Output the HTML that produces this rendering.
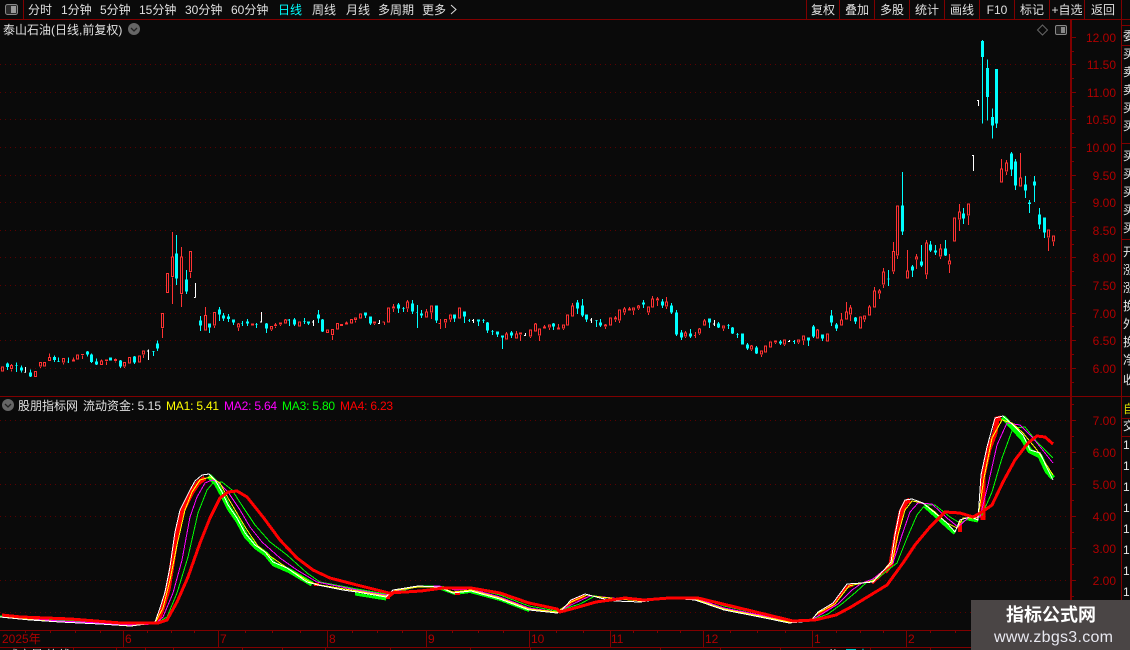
<!DOCTYPE html>
<html><head><meta charset="utf-8"><style>
html,body{margin:0;padding:0;background:#0a0a0a;overflow:hidden}
svg{display:block}
text{font-family:"Liberation Sans","WenQuanYi Zen Hei","Noto Sans CJK SC",sans-serif;font-size:12px}
.t{fill:#e0e0e0;text-anchor:middle}
.a{fill:#b00000;text-anchor:end;font-size:12px}
.m{fill:#b00000}
.r{fill:none;stroke:#ff3232;stroke-width:3}
.c{fill:#0ff;stroke:#0ff;stroke-width:3}
.w{fill:none;stroke:#fff;stroke-width:3}
.g{shape-rendering:crispEdges}
.s{letter-spacing:-.2px}
polyline{fill:none;shape-rendering:crispEdges}
</style></head><body>
<svg width="1130" height="650" viewBox="0 0 1130 650" xmlns="http://www.w3.org/2000/svg">
<rect width="1130" height="650" fill="#0a0a0a"/>
<!-- dotted grids -->
<path d="M0 64.5H1068M0 92.5H1068M0 119.5H1068M0 147.5H1068M0 175.5H1068M0 202.5H1068M0 230.5H1068M0 257.5H1068M0 285.5H1068M0 313.5H1068M0 340.5H1068M0 368.5H1068M0 420.5H1068M0 452.5H1068M0 484.5H1068M0 516.5H1068M0 548.5H1068M0 580.5H1068M0 612.5H1068" stroke="#5c0000" stroke-width="1" stroke-dasharray="1 4" fill="none"/>
<!-- frame -->
<g class="g" stroke="#800000" fill="none" stroke-width="1">
<path d="M0 19.5H1130M0 396.5H1130M0 630.5H1121M0 647.5H1121M1070.5 20V647M1071.5 20V647M1121.5 0V650M23.5 0V19M806.5 0V19M839.5 0V19M874.5 0V19M909.5 0V19M944.5 0V19M979.5 0V19M1014.5 0V19M1049.5 0V19M1084.5 0V19"/>
<path d="M1122 25.5H1130M1122 45.5H1130M1122 143.5H1130M1122 239.5H1130M1122 418.5H1130M1122 436.5H1130"/>
<path d="M1071 37.5h5M1071 64.5h5M1071 92.5h5M1071 119.5h5M1071 147.5h5M1071 175.5h5M1071 202.5h5M1071 230.5h5M1071 257.5h5M1071 285.5h5M1071 313.5h5M1071 340.5h5M1071 368.5h5M1071 51.5h3M1071 78.5h3M1071 106.5h3M1071 133.5h3M1071 161.5h3M1071 189.5h3M1071 216.5h3M1071 244.5h3M1071 271.5h3M1071 299.5h3M1071 326.5h3M1071 354.5h3M1071 382.5h3"/>
<path d="M1071 420.5h5M1071 452.5h5M1071 484.5h5M1071 516.5h5M1071 548.5h5M1071 580.5h5M1071 612.5h5M1071 404.5h3M1071 436.5h3M1071 468.5h3M1071 500.5h3M1071 532.5h3M1071 564.5h3M1071 596.5h3"/>
<path d="M123.5 630V647M218.5 630V647M327.5 630V647M426.5 630V647M529.5 630V647M610.5 630V647M703.5 630V647M812.5 630V647M906.5 630V647M25.5 630v3M50.5 630v3M75.5 630v3M100.5 630v3M147.5 630v3M171.5 630v3M194.5 630v3M245.5 630v3M272.5 630v3M300.5 630v3M352.5 630v3M377.5 630v3M402.5 630v3M452.5 630v3M478.5 630v3M503.5 630v3M556.5 630v3M583.5 630v3M633.5 630v3M657.5 630v3M680.5 630v3M730.5 630v3M757.5 630v3M785.5 630v3M836.5 630v3M860.5 630v3M883.5 630v3M930.5 630v3M955.5 630v3"/>
<path d="M73.5 647v3M116.5 647v3M145.5 647v3M173.5 647v3M242.5 647v3M282.5 647v3M325.5 647v3M390.5 647v3M470.5 647v3M530.5 647v3M660.5 647v3M720.5 647v3M780.5 647v3M870.5 647v3M930.5 647v3"/>
</g>
<!-- toolbar -->
<rect x="5.500" y="4.500" width="12" height="10" rx="2" fill="#2a2a2a" stroke="#888"/><rect x="11" y="6" width="5" height="7" fill="#999"/>
<g fill="#e0e0e0">
<text x="28" y="14">分时</text><text x="61" y="14">1分钟</text><text x="100" y="14">5分钟</text><text x="139" y="14">15分钟</text><text x="185" y="14">30分钟</text><text x="231" y="14">60分钟</text>
<text x="278" y="14" fill="#0ff">日线</text><text x="312" y="14">周线</text><text x="346" y="14">月线</text><text x="378" y="14">多周期</text><text x="422" y="14">更多</text>
</g>
<path d="M451 5l5 4.500-5 4.500" stroke="#ddd" fill="none"/>
<text class="t" x="823" y="14">复权</text><text class="t" x="857" y="14">叠加</text><text class="t" x="892" y="14">多股</text><text class="t" x="927" y="14">统计</text><text class="t" x="962" y="14">画线</text><text class="t" x="997" y="14">F10</text><text class="t" x="1032" y="14">标记</text><text class="t" x="1067" y="14">+自选</text><text class="t" x="1103" y="14">返回</text>
<!-- title -->
<text x="3" y="34" fill="#e0e0e0">泰山石油(日线,前复权)</text>
<circle cx="134" cy="29" r="6" fill="#666"/><path d="M131 28l3 3 3-3" stroke="#222" fill="none" stroke-width="1.300"/>
<path d="M1042.500 25l5 5-5 5-5-5z" fill="none" stroke="#666"/>
<rect x="1055.500" y="25.500" width="11" height="9" rx="1.500" fill="#222" stroke="#888"/><rect x="1061" y="27" width="4" height="6" fill="#888"/>
<!-- axis -->
<text class="a" x="1116" y="42">12.00</text><text class="a" x="1116" y="69">11.50</text><text class="a" x="1116" y="97">11.00</text><text class="a" x="1116" y="124">10.50</text><text class="a" x="1116" y="152">10.00</text><text class="a" x="1116" y="180">9.50</text><text class="a" x="1116" y="207">9.00</text><text class="a" x="1116" y="235">8.50</text><text class="a" x="1116" y="262">8.00</text><text class="a" x="1116" y="290">7.50</text><text class="a" x="1116" y="318">7.00</text><text class="a" x="1116" y="345">6.50</text><text class="a" x="1116" y="373">6.00</text>
<text class="a" x="1116" y="425">7.00</text><text class="a" x="1116" y="457">6.00</text><text class="a" x="1116" y="489">5.00</text><text class="a" x="1116" y="521">4.00</text><text class="a" x="1116" y="553">3.00</text><text class="a" x="1116" y="585">2.00</text>
<!-- month labels -->
<text class="m" x="2" y="643">2025年</text><text class="m" x="125" y="643">6</text><text class="m" x="220" y="643">7</text><text class="m" x="329" y="643">8</text><text class="m" x="428" y="643">9</text><text class="m" x="531" y="643">10</text><text class="m" x="611" y="643">11</text><text class="m" x="705" y="643">12</text><text class="m" x="814" y="643">1</text><text class="m" x="908" y="643">2</text>
<!-- candles -->
<g class="g">
<g transform="translate(.1667,220) scale(.33333)">
<path class="r" d="M4 441h6v12h-6zM34 432V436M31 436h6v10h-6zM34 449V455M103 454h6v16h-6zM118 427h6v11h-6zM121 441V444M130 427h6v11h-6zM148 400V412M145 412h6v10h-6zM187 415h6v11h-6zM190 429V434M220 412V420M217 420h6v3h-6zM229 405h6v12h-6zM244 403h6v1h-6zM247 407V417M304 418V423M301 423h6v11h-6zM316 420h6v2h-6zM319 425V435M346 415V419M343 419h6v3h-6zM346 425V428M370 427h6v11h-6zM373 441V444M385 412h6v17h-6zM415 408h6v18h-6zM427 393h6v9h-6zM430 405V414M484 280h6v43h-6zM487 326V354M499 160h6v58h-6zM517 36V111M514 111h6v59h-6zM517 173V252M544 81V111M541 111h6v110h-6zM544 224V261M568 94h6v61h-6zM571 158V174M616 261V286M613 286h6v44h-6zM640 277h6v38h-6zM643 318V324M715 309V312M712 312h6v9h-6zM715 324V333M754 312h6v3h-6zM811 319h6v8h-6zM814 330V333M826 309V315M823 315h6v2h-6zM826 320V324M838 309h6v3h-6zM841 315V318M856 297V300M853 300h6v9h-6zM895 306h6v12h-6z"/>
<path class="c" d="M22 427V450M19 432h6v7h-6zM49 427V456M46 436h6M64 436V457M61 444h6v6h-6zM91 448V471M88 459h6v9h-6zM163 407V426M160 412h6v6h-6zM175 412V426M172 425h6M205 412V429M202 426h3M262 393V410M259 396h6v6h-6zM274 400V429M271 405h6v19h-6zM289 415V435M286 426h6v6h-6zM328 414h6v6h-6zM361 420V444M358 423h6v15h-6zM403 408V432M400 411h6v15h-6zM460 393V408M457 394h6M472 361V393M469 372h6v12h-6zM529 45V195M526 102h6v72h-6zM559 150V222M556 180h6v33h-6zM601 288V333M598 303h6v12h-6zM628 312V339M625 312h6v9h-6zM658 261V303M655 270h6v12h-6zM670 279V303M667 288h6v6h-6zM685 282V306M682 291h6v4h-6zM700 300V315M697 300h6v6h-6zM727 303V318M724 310h3M742 297V318M739 306h6v3h-6zM769 309V324M766 313h6M799 309V339M796 312h6v12h-6zM868 297V318M862 300h6M883 294V318M880 300h6v12h-6z"/>
<path class="w" d="M76 441V458M73 457h3M445 388V420M440 393h5M586 189V233M581 232h5M784 276V307M779 306h5"/>
</g>
<g transform="translate(300.1667,280) scale(.33333)">
<path class="r" d="M79 150h6v8h-6zM94 148h6v16h-6zM97 167V180M109 130h6v17h-6zM121 133h6v3h-6zM139 124V129M136 129h6v3h-6zM151 118h6v11h-6zM163 114h6v5h-6zM166 122V127M178 102h6v12h-6zM220 126h6v3h-6zM223 132V135M247 126h6M253 126V135M262 84h6v42h-6zM280 72V81M277 81h6v3h-6zM280 87V96M322 60V66M319 66h6v18h-6zM322 87V96M379 87V96M376 96h6v15h-6zM391 78h6v18h-6zM394 99V117M421 117V147M415 130h6M433 118h6v8h-6zM436 129V144M448 105h6v12h-6zM451 120V126M475 84h6v30h-6zM619 156V162M616 162h6v15h-6zM649 153V162M646 162h6v12h-6zM658 159h6v3h-6zM661 165V183M688 150h6v18h-6zM691 171V174M706 129V132M703 132h6v21h-6zM715 147h6v18h-6zM718 168V183M733 135V141M730 141h6v3h-6zM745 135h6v6h-6zM748 144V150M775 132V144M772 144h6v3h-6zM787 135h6v9h-6zM790 147V150M799 105h6v30h-6zM817 69V78M814 78h6v30h-6z"/>
<path class="c" d="M13 114V132M10 124h6M25 126V135M22 126h6v3h-6zM55 90V129M52 105h6v9h-6zM67 117V156M64 120h6v33h-6zM196 99V114M193 99h6v6h-6zM211 111V135M208 111h6v18h-6zM295 69V99M292 75h6v9h-6zM310 81V96M307 86h6M337 60V102M334 72h6v21h-6zM352 75V144M349 97h3M364 90V114M361 102h6v3h-6zM409 78V129M406 78h6v42h-6zM463 105V126M460 105h6v9h-6zM493 96V129M490 96h6v12h-6zM508 117V126M505 121h3M535 120V138M532 120h6v3h-6zM550 117V129M547 122h6M562 126V159M559 129h6v21h-6zM577 150V165M574 154h6M592 156V171M589 156h6v6h-6zM607 168V207M604 168h6v3h-6zM634 153V174M631 159h6v6h-6zM760 129V150M757 132h6v6h-6zM832 60V102M829 69h6v15h-6zM847 57V111M844 78h6v27h-6zM859 105V126M856 105h6v12h-6zM889 120V141M886 121h6"/>
<path class="w" d="M40 120V138M35 126h5M238 120V132M233 131h5M520 117V129M515 122h5M676 159V168M671 166h5M874 114V129M869 120h5"/>
</g>
<g transform="translate(600.1667,280) scale(.33333)">
<path class="r" d="M16 132V135M13 135h6v3h-6zM16 141V147M28 114h6v21h-6zM46 108V114M43 114h6v3h-6zM46 120V126M55 90h6v30h-6zM58 123V129M73 81V87M70 87h6v9h-6zM73 99V105M88 81V87M85 87h6v3h-6zM97 84h6v6h-6zM100 93V105M115 75V78M112 78h6v6h-6zM115 87V90M142 81h6v15h-6zM145 99V105M157 48V57M154 57h6v24h-6zM172 51V57M169 57h6v3h-6zM172 63V78M199 51V66M196 66h6v12h-6zM199 81V87M256 153V159M253 159h6v9h-6zM256 171V174M286 156V174M282 166h4M298 144V147M295 147h6v12h-6zM298 162V165M313 117V123M310 123h6v12h-6zM367 138h6v6h-6zM370 147V153M454 195V198M451 198h6v9h-6zM454 210V213M481 213h6v9h-6zM484 225V231M493 198h6v18h-6zM508 186h6v15h-6zM523 183h6v3h-6zM526 189V192M550 180h6v12h-6zM553 195V198M592 180h6v6h-6zM595 189V192M607 168h6v12h-6zM610 183V195M652 147V150M649 150h6v24h-6zM679 162h6v21h-6zM724 99V120M721 120h6v15h-6zM739 66V96M736 96h6v21h-6zM751 75V84M748 84h6v18h-6zM751 105V123M778 111h6v33h-6zM790 108h6v9h-6zM793 120V126M808 75V81M805 81h6v24h-6z"/>
<path class="c" d="M1 117V141M-2 129h6v6h-6zM130 60V84M127 69h6v3h-6zM187 57V84M184 66h6v9h-6zM214 69V102M211 78h6v18h-6zM229 90V168M226 99h6v63h-6zM244 150V180M241 159h6v12h-6zM271 147V174M268 162h6v6h-6zM328 117V144M325 117h6v9h-6zM355 126V144M352 132h6v9h-6zM385 132V147M382 136h6M397 141V162M394 144h6v15h-6zM412 159V174M409 163h6M424 162h6v30h-6zM442 189V210M439 195h6v9h-6zM469 198V222M466 204h6v15h-6zM541 180V195M538 186h6v3h-6zM583 180V192M579 184h4M625 174V198M622 174h6v6h-6zM640 135V174M637 141h6v27h-6zM667 165V183M664 165h6v9h-6zM694 90V138M691 108h6v18h-6zM709 129V153M706 135h6v9h-6zM766 111V132M763 114h6v9h-6z"/>
<path class="w" d="M343 120V138M338 132h5M568 180V186M563 185h5"/>
</g>
<g transform="translate(860.1667,150) scale(.33333)">
<path class="r" d="M43 411V423M40 423h6v48h-6zM58 417V423M55 423h6v6h-6zM58 432V447M70 354V366M67 366h6v36h-6zM70 405V414M100 276V304M97 304h6v59h-6zM100 366V372M109 168h6v147h-6zM112 318V327M142 300V363M139 363h6v21h-6zM169 312V321M166 321h6v6h-6zM169 330V357M199 270V279M196 279h6v93h-6zM199 375V387M241 282V297M238 297h6v21h-6zM241 321V327M268 312V333M265 333h6v9h-6zM268 345V369M280 204h6v69h-6zM298 162V186M295 186h6v21h-6zM298 210V243M322 162h6v33h-6zM325 198V225M424 27V57M421 57h6v39h-6zM439 30V39M436 39h6v24h-6zM439 66V75M481 9V84M478 84h6v24h-6zM562 240h6v21h-6zM565 264V303M577 258h6v15h-6zM580 276V288"/>
<path class="c" d="M85 360V408M82 387h6M127 66V255M124 168h6v75h-6zM157 345V381M154 351h6v9h-6zM184 285V351M181 336h6v9h-6zM211 273V306M208 285h6v15h-6zM226 285V315M223 303h6v3h-6zM256 270V318M253 297h6v18h-6zM310 174V222M307 192h6v12h-6zM454 6V78M451 12h6v45h-6zM466 27V120M463 36h6v69h-6zM496 78V144M493 105h6v15h-6zM508 150V189M505 159h6v1h-6zM523 78V156M520 96h6v9h-6zM538 174V237M535 195h6v27h-6zM553 204V264M550 204h6v42h-6z"/>
<path class="w" d="M340 15V63M335 16h5"/>
</g>
<g transform="translate(780.1667,0) scale(.33333)">
<path class="c" d="M607 120V371M604 124h6v45h-6zM622 178V362M619 205h6v85h-6zM637 325V416M634 352h6v23h-6zM646 208h6v161h-6zM649 369V384"/>
<path class="w" d="M595 300V318M590 302h5"/>
</g>
</g>
<!-- indicator header -->
<circle cx="8" cy="405" r="6" fill="#666"/><path d="M5 404l3 3 3-3" stroke="#222" fill="none" stroke-width="1.300"/>
<text x="18" y="410" fill="#e0e0e0">股朋指标网</text>
<text x="83" y="410" fill="#e0e0e0">流动资金: 5.15</text>
<text class="s" x="166" y="410" fill="#ff0">MA1: 5.41</text>
<text class="s" x="224" y="410" fill="#f0f">MA2: 5.64</text>
<text class="s" x="282" y="410" fill="#0f0">MA3: 5.80</text>
<text class="s" x="340" y="410" fill="#f00">MA4: 6.23</text>
<!-- blocks -->
<g stroke-linejoin="miter">
<polyline stroke="#f00" stroke-width="5" points="158,621 163,606 168,590 172,565 177,532 182,512 187,502 192,492 198,483 205,478"/>
<polyline stroke="#0f0" stroke-width="5" points="209,476 216,483 222,494 229,508 238,521 246,536 256,547 266,554 274,564 290,571 312,584"/>
<polyline stroke="#0f0" stroke-width="3" points="355,594 386,599"/>
<polyline stroke="#f00" stroke-width="3" points="388,597 396,591"/>
<polyline stroke="#0f0" stroke-width="2" points="441,589 455,594 470,592 500,600 529,611"/>
<polyline stroke="#f00" stroke-width="3" points="562,611 571,602 585,596"/>
<polyline stroke="#f00" stroke-width="3" points="818,615 833,605 847,587 853,585"/>
<polyline stroke="#f00" stroke-width="3" points="872,583 884,572"/>
<polyline stroke="#f00" stroke-width="5" points="885,572 891,564 896,536 901,512 906,502 910,500"/>
<polyline stroke="#0f0" stroke-width="4" points="925,506 935,515 947,526 955,533"/>
<polyline stroke="#f00" stroke-width="4" points="960,532 960,521"/>
<polyline stroke="#0f0" stroke-width="3" points="968,519 978,521"/>
<polyline stroke="#f00" stroke-width="5" points="983,520 983,476 989,449 995,433 997,419 1001,418"/>
<polyline stroke="#0f0" stroke-width="5" points="1003,417 1013,428 1023,439 1030,451 1040,456 1047,471 1053,478"/>
<rect x="314" y="583" width="5" height="3" fill="#f00"/><rect x="386" y="595" width="4" height="4" fill="#f00"/><rect x="455" y="592" width="5" height="3" fill="#f00"/>
</g>
<!-- MA3 green -->
<polyline stroke="#0f0" points="0,616 60,620 100,622 130,625 155,624 167,617 177,593 188,557 198,513 207,490 213,483 222,482 232,490 243,507 255,525 270,542 287,555 307,573 320,582 357,589 386,594 405,590 418,586 439,586 458,589 471,588 500,595 529,606 557,611 580,604 595,596 610,598 640,601 669,598 695,597 724,606 760,614 789,621 811,620 828,614 843,603 856,592 866,583 878,578 888,570 897,563 907,538 917,515 925,505 935,505 950,517 960,523 973,517 982,515 992,492 1002,458 1013,428 1025,427 1037,442 1053,458"/>
<!-- MA2 magenta -->
<polyline stroke="#f0f" points="0,617 60,621 100,623 130,625 155,624 163,617 173,593 182,560 190,517 197,497 205,483 212,480 218,482 228,492 240,510 250,527 262,542 280,558 297,570 317,582 357,590 386,595 400,590 418,587 439,586 455,590 471,589 500,597 529,608 557,612 575,603 590,596 603,597 640,601 669,598 695,598 724,608 760,615 789,622 811,620 822,614 838,604 852,590 862,583 873,579 884,570 893,563 902,535 910,512 918,503 932,504 947,518 958,527 968,518 980,517 988,485 997,445 1007,423 1020,425 1033,438 1053,463"/>
<!-- MA1 yellow -->
<polyline stroke="#ff0" points="0,617 60,622 100,624 130,626 155,623 163,608 170,580 177,545 185,510 192,492 200,480 210,477 220,483 228,498 238,515 247,530 258,546 270,556 290,570 310,582 320,585 357,591 386,596 397,590 418,587 439,587 453,592 471,590 500,598 529,609 557,612 571,602 587,595 600,597 640,601 669,598 695,599 724,609 760,616 789,622 811,620 818,613 835,604 849,586 862,583 873,581 884,570 892,563 898,535 905,510 912,501 923,503 935,512 947,523 957,528 963,518 978,518 984,478 992,438 1002,420 1012,423 1023,433 1037,450 1053,475"/>
<!-- main white -->
<polyline stroke="#fff" points="0,617 30,620 60,622 100,624 131,626 146,624 155,622 160,608 165,592 170,567 175,532 180,510 185,500 190,490 195,481 202,475 209,474 215,480 222,492 228,505 237,518 245,533 255,545 265,552 273,562 287,568 307,582 318,585 343,590 357,592 386,597 393,590 418,586 439,587 453,593 471,591 500,599 529,610 557,613 560,612 571,600 585,594 600,598 615,601 640,602 669,598 695,600 724,610 760,617 789,623 811,621 818,612 833,603 847,584 862,583 873,582 884,570 891,562 895,535 900,510 905,500 912,499 923,503 935,513 947,523 955,532 960,520 970,517 978,520 981,475 987,447 995,418 1003,416 1013,425 1023,435 1030,450 1040,453 1047,468 1053,480"/>
<!-- MA4 red -->
<polyline stroke="#f00" stroke-width="3" points="2,615 21,617 71,619 121,623 158,623 167,620 177,602 188,577 200,543 210,518 220,498 228,492 237,491 247,497 263,517 280,540 297,558 313,570 330,578 357,585 389,593 421,591 443,588 471,588 500,593 529,603 557,609 560,612 575,608 596,602 625,598 644,600 669,598 698,598 727,605 760,613 793,621 815,620 836,615 851,607 869,596 887,585 903,563 915,545 930,527 945,512 960,513 973,517 982,512 992,505 1003,482 1015,460 1028,443 1037,436 1045,437 1053,444"/>
<!-- right column -->
<clipPath id="rc"><rect x="1122" y="20" width="8" height="630"/></clipPath>
<g clip-path="url(#rc)" fill="#e8e8e8">
<text x="1123" y="40">委</text><text x="1123" y="58">买</text><text x="1123" y="76">卖</text><text x="1123" y="94">卖</text><text x="1123" y="112">买</text><text x="1123" y="130">买</text><text x="1123" y="160">买</text><text x="1123" y="178">买</text><text x="1123" y="196">买</text><text x="1123" y="214">买</text><text x="1123" y="232">买</text><text x="1123" y="256">开</text><text x="1123" y="274">涨</text><text x="1123" y="292">涨</text><text x="1123" y="310">换</text><text x="1123" y="328">外</text><text x="1123" y="346">换</text><text x="1123" y="364">净</text><text x="1123" y="384">收</text>
<text x="1123" y="413" fill="#d8d800">自</text><text x="1123" y="430">交</text>
<text x="1123" y="449">1</text><text x="1123" y="470">1</text><text x="1123" y="491">1</text><text x="1123" y="512">1</text><text x="1123" y="533">1</text><text x="1123" y="554">1</text><text x="1123" y="575">1</text><text x="1123" y="596">1</text>
</g>
<!-- bottom fragments -->
<text x="7" y="659" fill="#e0e0e0">成交量 均线</text>
<text x="827" y="659" fill="#e0e0e0">分</text><text x="845" y="659" fill="#0ff">图表</text>
<!-- watermark -->
<rect x="971" y="600" width="159" height="50" fill="#4a4545"/>
<text x="1051" y="621" fill="#fff" text-anchor="middle" font-weight="bold" style="font-size:18px">指标公式网</text>
<text x="1053.500" y="642" fill="#e8e8f0" text-anchor="middle" textLength="119" style="font-size:16px">www.zbgs3.com</text>
</svg>
</body></html>
